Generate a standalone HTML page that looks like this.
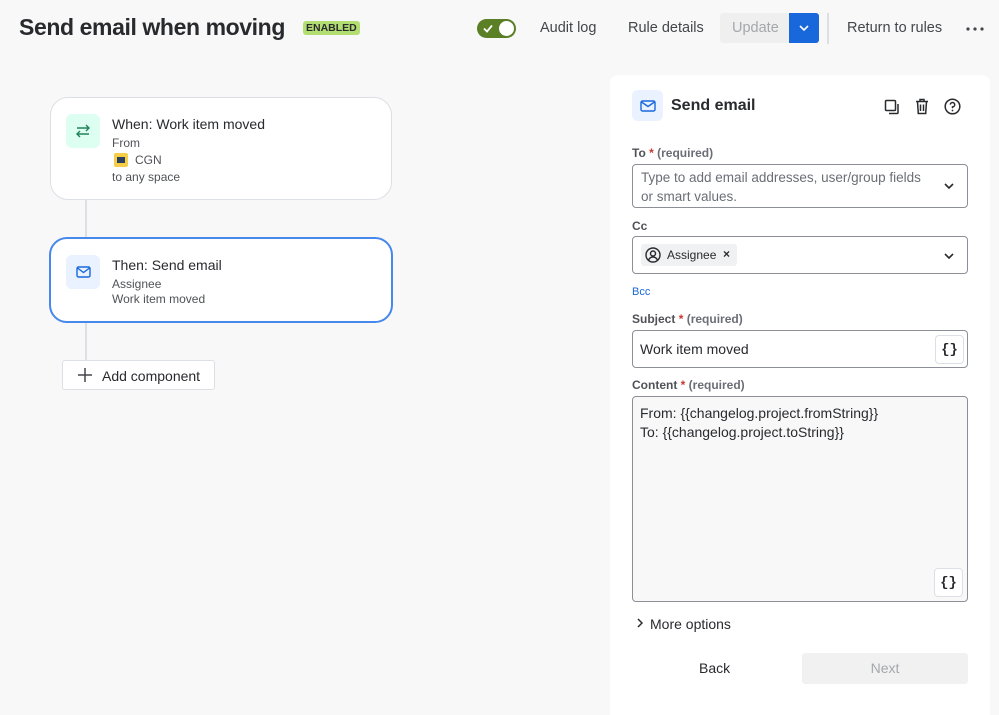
<!DOCTYPE html>
<html><head><style>
*{box-sizing:border-box;margin:0;padding:0}
body{width:999px;height:703px;background:#f8f8f8;font-family:"Liberation Sans",sans-serif;color:#292a2e;position:relative;overflow:hidden}
.a{position:absolute}
.t{white-space:nowrap}
.card{position:absolute;background:#fff;border:1px solid #dcdfe4;border-radius:18px}
.ic{position:absolute;width:34px;height:34px;border-radius:6px;display:flex;align-items:center;justify-content:center}
.lbl{position:absolute;font-size:12px;font-weight:bold;color:#505258}
.lbl span.r{color:#c9372c}
.lbl span.q{color:#6b6e76}
.inp{position:absolute;border:1px solid #8c8f97;border-radius:4px;background:#fff}
.br{position:absolute;width:29px;height:29px;border:1px solid #dcdfe4;border-radius:4px;background:#fff;font-family:"Liberation Mono",monospace;font-weight:bold;font-size:14px;display:flex;align-items:center;justify-content:center}
.hd{position:absolute;top:20px;font-size:14.5px;color:#44464c;white-space:nowrap}
</style></head><body>
<div class="a t" style="left:19px;top:14px;font-size:23px;font-weight:bold;letter-spacing:-0.4px">Send email when moving</div>
<div class="a t" style="left:303px;top:21px;background:#b3df72;border-radius:3px;padding:1px 3px;font-size:10.5px;font-weight:bold;color:#292a2e">ENABLED</div>
<div class="a" style="left:477px;top:19px;width:39px;height:19px;border-radius:10px;background:#5b7f24">
 <svg class="a" style="left:6px;top:5px" width="10" height="9" viewBox="0 0 10 9"><path d="M1 4.5l3 3L9 1.5" stroke="#fff" stroke-width="1.8" fill="none"/></svg>
 <div class="a" style="left:22px;top:2px;width:15px;height:15px;border-radius:50%;background:#fff"></div></div>
<div class="hd" style="left:540px">Audit log</div>
<div class="hd" style="left:628px">Rule details</div>
<div class="a" style="left:720px;top:13px;width:69px;height:30px;background:#efefef;border-radius:3px 0 0 3px;color:#a5a7ad;font-size:14.5px;padding:7px 0 0 12px">Update</div>
<div class="a" style="left:789px;top:13px;width:30px;height:30px;background:#1868db;border-radius:0 3px 3px 0"><svg class="a" style="left:10px;top:12px" width="10" height="6"><path d="M1 1l4 4 4-4" stroke="#fff" stroke-width="1.6" fill="none"/></svg></div>
<div class="a" style="left:827px;top:13px;width:2px;height:31px;background:#dcdfe4"></div>
<div class="hd" style="left:847px">Return to rules</div>
<svg class="a" style="left:966px;top:27px" width="18" height="4"><circle cx="2" cy="2" r="1.6" fill="#44464c"/><circle cx="9" cy="2" r="1.6" fill="#44464c"/><circle cx="16" cy="2" r="1.6" fill="#44464c"/></svg>

<div class="a" style="left:85px;top:198px;width:2px;height:162px;background:#dcdfe4"></div>
<div class="card" style="left:50px;top:97px;width:342px;height:103px">
 <div class="ic" style="left:15px;top:16px;background:#dcfff1"><svg width="16" height="14" viewBox="0 0 16 14"><path d="M2 4h12M11 1l3 3-3 3M14 10H2M5 7l-3 3 3 3" stroke="#1f845a" stroke-width="1.4" fill="none"/></svg></div>
 <div class="a t" style="left:61px;top:18px;font-size:14px">When: Work item moved</div>
 <div class="a t" style="left:61px;top:38px;font-size:12px;color:#505258">From</div>
 <div class="a" style="left:63px;top:55px;width:14px;height:14px;background:#f5cd47;border-radius:2px"><div class="a" style="left:3px;top:4px;width:8px;height:6px;background:#2c3e5d"></div></div>
 <div class="a t" style="left:84px;top:55px;font-size:12px;color:#505258">CGN</div>
 <div class="a t" style="left:61px;top:72px;font-size:12px;color:#505258">to any space</div>
</div>
<div class="card" style="left:49px;top:237px;width:344px;height:86px;border:2px solid #4688ec">
 <div class="ic" style="left:15px;top:16px;background:#e9f2fe"><svg width="15" height="12" viewBox="0 0 15 12"><rect x="1" y="1" width="13" height="10" rx="1.5" stroke="#1868db" stroke-width="1.4" fill="none"/><path d="M1.5 2l6 4.5 6-4.5" stroke="#1868db" stroke-width="1.4" fill="none"/></svg></div>
 <div class="a t" style="left:61px;top:18px;font-size:14px">Then: Send email</div>
 <div class="a t" style="left:61px;top:38px;font-size:12px;color:#505258">Assignee</div>
 <div class="a t" style="left:61px;top:53px;font-size:12px;color:#505258">Work item moved</div>
</div>
<div class="a" style="left:62px;top:360px;width:153px;height:30px;background:#fff;border:1px solid #dcdfe4;border-radius:3px">
 <svg class="a" style="left:15px;top:7px" width="14" height="14"><path d="M7 0v14M0 7h14" stroke="#44464c" stroke-width="1.5"/></svg>
 <div class="a t" style="left:39px;top:7px;font-size:14px;color:#292a2e">Add component</div></div>

<div class="a" style="left:610px;top:75px;width:380px;height:640px;background:#fff;border-radius:8px 8px 0 0">
 <div class="ic" style="left:22px;top:15px;width:31px;height:31px;background:#e9f2fe"><svg width="16" height="12" viewBox="0 0 16 12"><rect x="1" y="1" width="14" height="10" rx="1.5" stroke="#1868db" stroke-width="1.4" fill="none"/><path d="M1.5 2l6.5 4.5 6.5-4.5" stroke="#1868db" stroke-width="1.4" fill="none"/></svg></div>
 <div class="a t" style="left:61px;top:22px;font-size:16px;font-weight:bold">Send email</div>
 <svg class="a" style="left:274px;top:24px" width="16" height="16" viewBox="0 0 16 16"><rect x="1.5" y="1.5" width="10" height="10" rx="1" stroke="#292a2e" stroke-width="1.5" fill="none"/><path d="M14 5v8.5a1 1 0 0 1-1 1H5" stroke="#292a2e" stroke-width="1.5" fill="none"/></svg>
 <svg class="a" style="left:305px;top:23px" width="14" height="17" viewBox="0 0 14 17"><path d="M1 3.5h12M5 3.5V1.5h4v2M2.5 3.5l.8 12h7.4l.8-12M5.5 6.5v6.5M8.5 6.5v6.5" stroke="#292a2e" stroke-width="1.5" fill="none"/></svg>
 <svg class="a" style="left:334px;top:23px" width="17" height="17" viewBox="0 0 17 17"><circle cx="8.5" cy="8.5" r="7.3" stroke="#292a2e" stroke-width="1.5" fill="none"/><path d="M6.3 6.6a2.2 2.2 0 1 1 2.2 2.3v1.4" stroke="#292a2e" stroke-width="1.5" fill="none"/><circle cx="8.5" cy="12.5" r=".9" fill="#292a2e"/></svg>

 <div class="lbl t" style="left:22px;top:71px">To <span class="r">*</span> <span class="q">(required)</span></div>
 <div class="inp" style="left:22px;top:89px;width:336px;height:44px"><div class="a" style="left:8px;top:3px;font-size:13.5px;line-height:19px;color:#6b6e76;width:292px">Type to add email addresses, user/group fields or smart values.</div>
  <svg class="a" style="left:311px;top:18px" width="10" height="6"><path d="M1 1l4 4 4-4" stroke="#292a2e" stroke-width="1.6" fill="none"/></svg></div>
 <div class="lbl t" style="left:22px;top:144px">Cc</div>
 <div class="inp" style="left:22px;top:161px;width:336px;height:38px">
  <div class="a" style="left:8px;top:7px;width:96px;height:22px;background:#f0f1f2;border-radius:3px">
   <svg class="a" style="left:4px;top:3px" width="16" height="16" viewBox="0 0 16 16"><circle cx="8" cy="8" r="7" stroke="#292a2e" stroke-width="1.4" fill="none"/><circle cx="8" cy="6.5" r="2.5" stroke="#292a2e" stroke-width="1.4" fill="none"/><path d="M3.5 13c1-2 2.5-3 4.5-3s3.5 1 4.5 3" stroke="#292a2e" stroke-width="1.4" fill="none"/></svg>
   <div class="a t" style="left:26px;top:4px;font-size:12px">Assignee</div>
   <div class="a t" style="left:82px;top:3px;font-size:12px;font-weight:bold">×</div></div>
  <svg class="a" style="left:311px;top:16px" width="10" height="6"><path d="M1 1l4 4 4-4" stroke="#292a2e" stroke-width="1.6" fill="none"/></svg></div>
 <div class="a t" style="left:22px;top:211px;font-size:11px;color:#1868db">Bcc</div>
 <div class="lbl t" style="left:22px;top:237px">Subject <span class="r">*</span> <span class="q">(required)</span></div>
 <div class="inp" style="left:22px;top:255px;width:336px;height:38px"><div class="a t" style="left:7px;top:10px;font-size:14px">Work item moved</div><div class="br" style="left:302px;top:4px">{}</div></div>
 <div class="lbl t" style="left:22px;top:303px">Content <span class="r">*</span> <span class="q">(required)</span></div>
 <div class="inp" style="left:22px;top:321px;width:336px;height:206px;background:#f8f8f8"><div class="a t" style="left:7px;top:7px;font-size:14px;line-height:19px">From: {{changelog.project.fromString}}<br>To: {{changelog.project.toString}}</div><div class="br" style="left:301px;top:171px">{}</div></div>
 <svg class="a" style="left:27px;top:543px" width="6" height="10"><path d="M1 1l4 4-4 4" stroke="#292a2e" stroke-width="1.5" fill="none"/></svg>
 <div class="a t" style="left:40px;top:541px;font-size:14px">More options</div>
 <div class="a t" style="left:89px;top:585px;font-size:14px;color:#292a2e">Back</div>
 <div class="a" style="left:192px;top:578px;width:166px;height:31px;background:#f1f1f1;border-radius:3px;color:#a5a7ad;font-size:14px;text-align:center;padding-top:7px">Next</div>
</div>
</body></html>
